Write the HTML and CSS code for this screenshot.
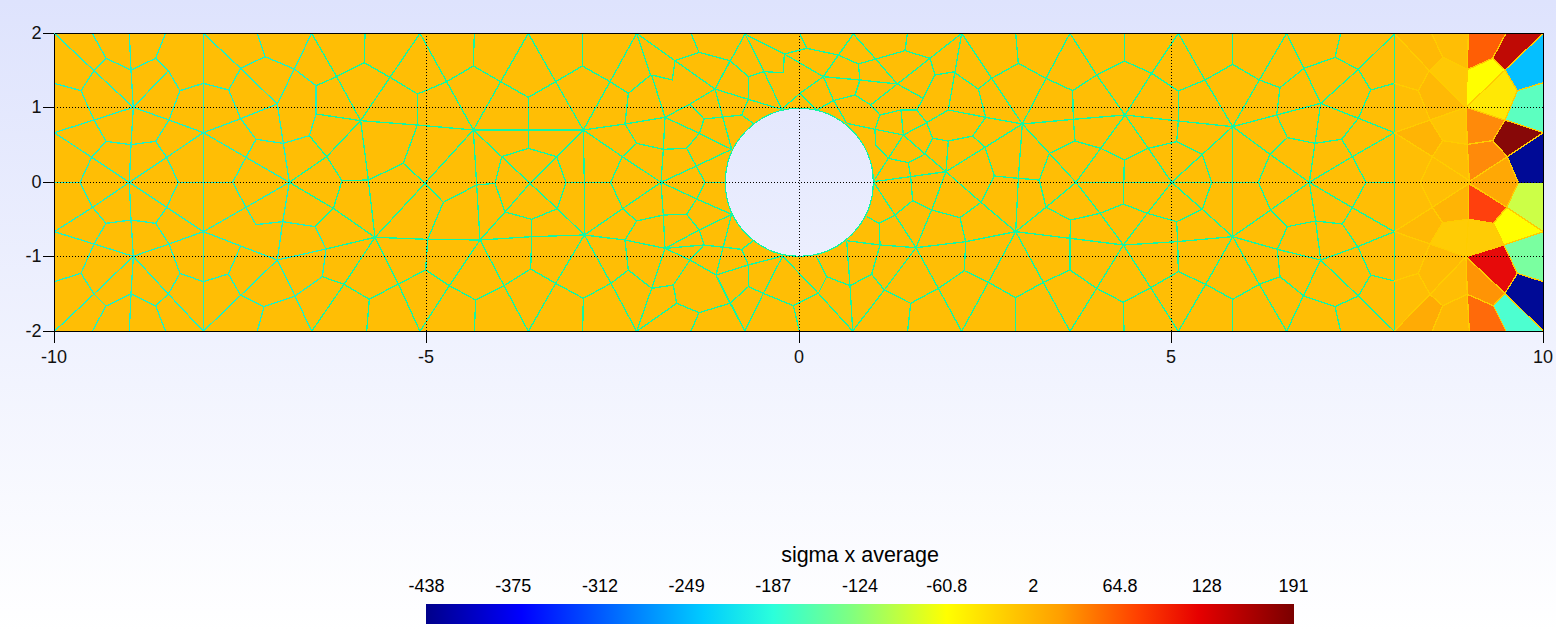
FILE: index.html
```html
<!DOCTYPE html>
<html lang="en">
<head>
<meta charset="utf-8">
<title>sigma x average</title>
<link rel="stylesheet" href="styles.css">
</head>
<body>
<main class="page">
<svg class="plot" width="1556" height="368" viewBox="0 0 1556 368" xmlns="http://www.w3.org/2000/svg">
  <defs><clipPath id="frame"><rect x="54" y="33" width="1490" height="299"/></clipPath></defs>

  <!-- plate with hole -->
  <path class="plate" fill-rule="evenodd" d="M54 33H1544V331H54Z M725.3 182.3A74 74 0 1 0 873.3 182.3A74 74 0 1 0 725.3 182.3Z"/>

  <g clip-path="url(#frame)">
    <!-- right end cells, upper half -->
    <g class="cells" transform="translate(1380 20) scale(.33333)">
      <polygon class="c-b9" points="43,40 155,40 188,112 148,152"/>
      <polygon class="c-bd" points="155,40 265,40 262,148 188,112"/>
      <polygon class="c-c8" points="188,112 262,148 258,262 148,152"/>
      <polygon class="c-b9" points="148,152 258,262 150,300 115,212"/>
      <polygon class="c-bd" points="43,190 115,212 150,300 43,338"/>
      <polygon class="c-bd" points="43,40 148,152 115,212 43,190"/>
      <polygon class="c-c4" points="150,300 258,262 262,373 188,362"/>
      <polygon class="c-b4" points="43,338 150,300 188,362 157,410"/>
      <polygon class="c-bd" points="157,410 188,362 262,373 270,483 120,488"/>
      <polygon class="c-bd" points="43,338 157,410 120,488 43,488"/>
      <polygon class="c-5e" points="265,40 378,40 338,115 264,148"/>
      <polygon class="c-red1" points="378,40 490,40 375,150 338,115"/>
      <polygon class="c-cyan" points="490,40 490,188 412,212 375,150"/>
      <polygon class="c-y1" points="264,148 338,115 375,150 258,262"/>
      <polygon class="c-y2" points="258,262 375,150 412,212 375,300"/>
      <polygon class="c-aqua" points="412,212 490,188 490,338 375,300"/>
      <polygon class="c-or" points="258,262 375,300 338,362 262,373"/>
      <polygon class="c-mar" points="375,300 490,338 382,410 338,362"/>
      <polygon class="c-navy" points="490,338 490,488 415,488 382,410"/>
      <polygon class="c-or" points="262,373 338,362 382,410 270,483"/>
      <polygon class="c-a8" points="270,483 382,410 415,488 270,490"/>
    </g>
    <!-- right end cells, lower half -->
    <g class="cells" transform="translate(1380 175) scale(.33333)">
      <polygon class="c-a8" points="268,25 415,23 380,97"/>
      <polygon class="c-lime" points="415,23 490,23 490,170 380,97"/>
      <polygon class="c-40" points="265,28 380,97 340,145 265,135"/>
      <polygon class="c-y1" points="380,97 490,170 372,210 340,145"/>
      <polygon class="c-aq2" points="490,170 490,320 412,295 372,210"/>
      <polygon class="c-cc" points="188,143 265,133 340,145 372,210 258,245 150,207"/>
      <polygon class="c-red2" points="258,245 372,210 412,295 375,355"/>
      <polygon class="c-navy" points="412,295 490,320 490,468 375,355"/>
      <polygon class="c-94" points="258,245 375,355 340,392 262,358"/>
      <polygon class="c-6a" points="262,358 340,392 378,468 268,468"/>
      <polygon class="c-aq3" points="340,392 375,355 490,468 378,468"/>
      <polygon class="c-ab" points="43,468 150,358 188,392 157,468"/>
      <polygon class="c-b9" points="157,468 188,392 262,358 268,468"/>
      <polygon class="c-bd" points="150,358 258,245 262,358 188,392"/>
      <polygon class="c-bb" points="115,295 150,207 258,245 150,358"/>
      <polygon class="c-bd" points="43,318 115,295 150,358 43,468"/>
      <polygon class="c-bd" points="43,170 150,207 115,295 43,318"/>
      <polygon class="c-b9" points="43,170 157,97 188,143 150,207"/>
      <polygon class="c-b4" points="157,97 268,25 265,135 188,143"/>
      <polygon class="c-bd" points="43,23 120,23 157,97 43,170"/>
      <polygon class="c-bd" points="120,23 268,25 157,97"/>
    </g>

    <!-- mesh, left part -->
    <g class="mesh mesh-cool" transform="translate(0 20) scale(.33333)">
      <polyline points="163,40 282,152 400,262"/>
      <polyline points="277,40 318,115 393,150 467,115 497,40"/>
      <polyline points="388,40 393,150 400,262 393,374 388,487 393,600 400,709 393,822 388,934"/>
      <polyline points="467,115 505,152 540,212 610,190 686,210 722,145 795,110 772,40"/>
      <polyline points="610,40 610,934"/>
      <polyline points="610,40 722,145 832,252"/>
      <polyline points="505,152 400,262"/>
      <polyline points="318,115 282,152 243,212 163,190"/>
      <polyline points="243,212 282,300 318,364 393,374 467,364 507,300 540,212"/>
      <polyline points="163,338 282,300 400,262 507,300 610,338 722,296 832,252"/>
      <polyline points="686,210 722,296 768,358 850,370 928,347 948,282 948,197 883,147 795,110"/>
      <polyline points="832,252 883,147 935,40"/>
      <polyline points="832,252 850,370 868,487 848,605 832,720"/>
      <polyline points="163,338 275,412 388,487 500,412 610,338"/>
      <polyline points="275,412 240,487 278,562 318,610 393,600 467,610 500,562 535,487 500,412"/>
      <polyline points="318,364 275,412"/>
      <polyline points="467,364 500,412"/>
      <polyline points="163,487 240,487"/>
      <polyline points="535,487 698,487 738,412 768,358"/>
      <polyline points="698,487 738,562 768,614 848,605 945,620 978,687 967,770 885,828 792,860 722,826 685,762 610,785 540,760 505,822 467,858 393,822 318,858 282,822 243,760 163,785"/>
      <polyline points="163,635 278,562 388,487 500,562 610,635 738,562 868,487"/>
      <polyline points="610,338 738,412 868,487"/>
      <polyline points="163,635 282,672 400,709 507,672 610,635 722,678 832,720 978,687"/>
      <polyline points="318,610 282,672 243,760"/>
      <polyline points="467,610 507,672 540,760"/>
      <polyline points="400,709 282,822 163,934"/>
      <polyline points="400,709 505,822 610,934 722,826 832,720"/>
      <polyline points="832,720 885,828 935,934"/>
      <polyline points="792,860 772,934"/>
      <polyline points="467,858 497,934"/>
      <polyline points="318,858 277,934"/>
      <polyline points="722,678 685,762"/>
    </g>

    <!-- mesh, second part -->
    <g class="mesh" transform="translate(330 20) scale(.33333)">
      <polyline points="105,40 103,128 180,172 263,222 350,185 430,138 512,185 595,232 677,185 757,138 840,185 895,220 962,165"/>
      <polyline points="-42,197 20,170 103,128"/>
      <polyline points="-55,40 20,170 92,302 180,172 270,40 350,185 430,330 512,185 595,40 677,185 760,330 840,185 920,40 962,165"/>
      <polyline points="433,40 430,138"/>
      <polyline points="757,40 757,138"/>
      <polyline points="920,40 1035,122"/>
      <polyline points="-42,282 92,302 262,315 430,330 595,330 760,330 885,312 1005,292"/>
      <polyline points="263,222 262,315 220,430 115,480 36,482 10,565"/>
      <polyline points="595,232 595,385 515,410 495,490 525,576 605,598 682,566 708,488 680,410 595,385"/>
      <polyline points="430,330 515,410 600,490 682,566 763,645"/>
      <polyline points="760,330 680,410 600,490 525,576 450,660"/>
      <polyline points="760,330 763,487 763,645"/>
      <polyline points="760,330 877,410 993,487"/>
      <polyline points="895,220 885,312 920,370 877,410 842,487 878,566 920,603 885,660 895,750 965,805"/>
      <polyline points="920,370 1000,388"/>
      <polyline points="430,330 285,490 135,652"/>
      <polyline points="92,302 115,480 135,652"/>
      <polyline points="-62,347 -10,410 92,302"/>
      <polyline points="-10,410 36,482"/>
      <polyline points="-122,487 -10,410"/>
      <polyline points="220,430 285,490 340,547 440,495 495,490"/>
      <polyline points="430,330 440,495 450,660"/>
      <polyline points="708,488 842,487"/>
      <polyline points="340,547 293,658 287,750 205,792 118,838 42,793 -23,770"/>
      <polyline points="135,652 293,658 450,660 605,650 763,645 885,660 1005,685"/>
      <polyline points="135,652 -12,687"/>
      <polyline points="135,652 42,793 -55,934"/>
      <polyline points="135,652 205,792 270,934 358,797 450,660 522,797 595,934 677,790 763,645 843,790 920,934 965,805"/>
      <polyline points="-122,487 10,565 135,652"/>
      <polyline points="10,565 -45,620"/>
      <polyline points="605,598 605,650 602,747 522,797"/>
      <polyline points="602,747 677,790 760,835 843,790 895,750"/>
      <polyline points="287,750 358,797 437,840 522,797"/>
      <polyline points="437,840 433,934"/>
      <polyline points="760,835 758,934"/>
      <polyline points="118,838 110,934"/>
      <polyline points="878,566 763,645"/>
      <polyline points="993,487 878,566"/>
      <polyline points="920,934 1040,850"/>
      <polyline points="920,603 1000,585"/>
    </g>

    <!-- mesh, centre around the hole -->
    <g class="mesh" transform="translate(640 30) scale(.33333)">
      <polyline points="35,135 75,262 70,358 63,457 70,555 75,655 35,775"/>
      <polyline points="105,92 177,67 153,10"/>
      <polyline points="105,92 97,150 35,135"/>
      <polyline points="105,92 225,177 150,222 75,262"/>
      <polyline points="177,67 270,92 225,177 315,12"/>
      <polyline points="270,92 325,140 325,208 225,177"/>
      <polyline points="315,12 372,125 425,238"/>
      <polyline points="325,140 372,125 430,128 433,72 315,12"/>
      <polyline points="433,72 550,140 640,12"/>
      <polyline points="433,72 500,55 480,12"/>
      <polyline points="500,55 595,75 640,12"/>
      <polyline points="595,75 550,140 480,190 425,238"/>
      <polyline points="595,75 655,102 707,87 795,62 802,12"/>
      <polyline points="640,12 707,87 772,162 870,85 795,62"/>
      <polyline points="870,85 965,10"/>
      <polyline points="655,102 660,150 645,195 692,225 772,162"/>
      <polyline points="550,140 660,150 772,162"/>
      <polyline points="870,85 885,135 945,125 965,10"/>
      <polyline points="885,135 850,205 772,162"/>
      <polyline points="325,208 425,238"/>
      <polyline points="550,140 580,210 620,280"/>
      <polyline points="530,240 580,212 645,195"/>
      <polyline points="480,190 530,240"/>
      <polyline points="75,262 178,310 275,358 225,177"/>
      <polyline points="150,222 192,267 178,310 140,355 195,457 255,457"/>
      <polyline points="192,267 305,255 340,280"/>
      <polyline points="305,255 325,208"/>
      <polyline points="70,358 140,355"/>
      <polyline points="63,457 165,410 275,358"/>
      <polyline points="63,457 170,507 275,553"/>
      <polyline points="195,457 170,507 140,553 178,600 275,553"/>
      <polyline points="70,555 140,553"/>
      <polyline points="75,655 178,600 192,645 75,655"/>
      <polyline points="192,645 305,658 340,632"/>
      <polyline points="305,658 325,705 228,735"/>
      <polyline points="75,655 150,690 228,735 275,553"/>
      <polyline points="150,690 100,765 35,775"/>
      <polyline points="150,690 192,645"/>
      <polyline points="100,765 110,820 177,848 270,820 228,735"/>
      <polyline points="228,735 315,903 370,790 428,678"/>
      <polyline points="110,820 -10,904"/>
      <polyline points="177,848 153,903"/>
      <polyline points="270,820 315,903"/>
      <polyline points="325,705 428,678"/>
      <polyline points="325,705 325,770 370,790 460,827 535,790 428,678"/>
      <polyline points="535,790 560,740 528,678"/>
      <polyline points="460,827 478,903"/>
      <polyline points="325,770 270,820"/>
      <polyline points="535,790 638,903"/>
      <polyline points="560,740 630,767 695,733 720,645 718,580 680,560"/>
      <polyline points="620,632 630,767 638,903"/>
      <polyline points="620,632 720,645 828,653"/>
      <polyline points="718,580 765,555 818,512 812,440 805,398"/>
      <polyline points="700,455 765,555 828,653"/>
      <polyline points="700,455 812,440 918,425"/>
      <polyline points="700,455 745,385 790,315"/>
      <polyline points="620,280 705,298 790,315 783,240 720,255 692,225"/>
      <polyline points="720,255 705,298 707,345 745,385 805,398 855,372 878,325 860,278 790,315"/>
      <polyline points="790,315 855,372 918,425"/>
      <polyline points="783,240 830,240 860,278 925,240 945,125"/>
      <polyline points="878,325 925,333 918,425"/>
      <polyline points="830,240 850,205"/>
      <polyline points="925,240 1037,262"/>
      <polyline points="925,333 998,318"/>
      <polyline points="918,425 1035,352"/>
      <polyline points="918,425 1023,517"/>
      <polyline points="818,512 875,540 828,653"/>
      <polyline points="918,425 875,540 960,563"/>
      <polyline points="828,653 977,635"/>
      <polyline points="828,653 733,780 638,903"/>
      <polyline points="695,733 733,780 812,820 895,775 828,653"/>
      <polyline points="812,820 803,903"/>
      <polyline points="895,775 973,722"/>
      <polyline points="895,775 965,904"/>
    </g>

    <!-- mesh, right part -->
    <g class="mesh" transform="translate(950 20) scale(.33333)">
      <polyline points="35,40 125,175 217,312 288,175 360,40 440,165 525,285 605,160 685,40 765,180 848,320 928,180 1010,40 1062,145 1112,250"/>
      <polyline points="197,40 205,130 125,175 85,207 10,155"/>
      <polyline points="205,130 288,175 368,212 440,165 523,123 605,160 685,213 765,180 848,133 928,180 990,203 1062,145 1155,112 1172,40"/>
      <polyline points="523,40 523,123"/>
      <polyline points="848,40 848,133"/>
      <polyline points="85,207 107,292 68,348"/>
      <polyline points="68,348 105,382"/>
      <polyline points="107,292 217,312 370,298 525,285 685,303 848,320 980,285 1112,250 1225,295 1333,338"/>
      <polyline points="368,212 370,298 375,363 298,400 268,480 288,562 362,600 450,580 520,552 592,580 680,605 757,568 785,487 757,403 680,365 595,385 523,420 452,385 375,363"/>
      <polyline points="685,213 685,303 680,365"/>
      <polyline points="217,312 298,400 378,487 452,385 525,285 595,385 665,487 757,403 848,320 848,650"/>
      <polyline points="217,312 105,382 133,468 205,475 268,480"/>
      <polyline points="133,468 93,547 30,593 47,665 43,752 115,787 197,833 280,787 360,750 440,805 520,847 602,803 685,755 767,793 848,838 928,793 990,770 1062,828 1155,860 1225,828 1262,765 1333,783"/>
      <polyline points="217,312 205,475 197,635"/>
      <polyline points="93,547 197,635 288,562 378,487 450,580 520,675 592,580 665,487 757,568 848,650"/>
      <polyline points="378,487 523,487 785,487"/>
      <polyline points="523,420 520,552"/>
      <polyline points="785,487 925,487 960,403 1012,353 1095,370 1175,358 1225,295 1262,210 1333,190"/>
      <polyline points="848,320 960,403 1078,487 1207,410 1333,338"/>
      <polyline points="925,487 962,570 1012,620 1097,603 1177,612 1223,680 1262,765"/>
      <polyline points="848,650 962,570 1078,487 1207,563 1333,635"/>
      <polyline points="1078,487 1095,370 1112,250"/>
      <polyline points="1078,487 1097,603 1112,720"/>
      <polyline points="1175,358 1207,410 1248,487 1207,563 1177,612"/>
      <polyline points="1248,487 1333,487"/>
      <polyline points="990,203 980,285 1012,353"/>
      <polyline points="1112,250 1225,148 1335,40"/>
      <polyline points="1155,112 1225,148 1262,210"/>
      <polyline points="1112,720 1223,680 1333,635"/>
      <polyline points="848,650 982,688 1112,720"/>
      <polyline points="982,688 1012,620"/>
      <polyline points="982,688 990,770"/>
      <polyline points="1112,720 1060,828 1010,934 928,793 848,650 767,793 685,934 602,803 520,675 440,805 360,934 280,787 197,635 115,787 35,934"/>
      <polyline points="1112,720 1225,828 1333,934"/>
      <polyline points="1155,860 1172,934"/>
      <polyline points="848,838 848,934"/>
      <polyline points="520,847 522,934"/>
      <polyline points="197,833 197,934"/>
      <polyline points="197,635 360,655 520,675 680,665 848,650"/>
      <polyline points="362,600 360,655 360,750"/>
      <polyline points="680,605 683,665 685,755"/>
      <polyline points="47,665 197,635"/>
      <polyline points="1333,40 1333,934"/>
    </g>

    <!-- hole outline -->
    <circle class="hole-edge" cx="799.3" cy="182.3" r="74"/>

    <!-- cell borders at the right end -->
    <g class="mesh mesh-warm" transform="translate(1380 20) scale(.33333)">
      <polyline points="43,40 148,152 188,112 155,40"/>
      <polyline points="188,112 262,148"/>
      <polyline points="148,152 258,262"/>
      <polyline points="43,190 115,212 148,152"/>
      <polyline points="115,212 150,300 258,262"/>
      <polyline points="43,338 150,300 188,362 262,373"/>
      <polyline points="43,338 157,410 270,483"/>
      <polyline points="188,362 157,410 120,488"/>
      <polyline points="265,40 262,148 258,262 262,373 268,483"/>
      <polyline points="378,40 338,115 264,148"/>
      <polyline points="490,40 375,150 338,115"/>
      <polyline points="375,150 258,262"/>
      <polyline points="375,150 412,212 375,300 258,262"/>
      <polyline points="412,212 490,188"/>
      <polyline points="375,300 490,338 382,410 338,362 375,300"/>
      <polyline points="338,362 262,373"/>
      <polyline points="382,410 270,483"/>
      <polyline points="382,410 415,488"/>
    </g>
    <g class="mesh mesh-warm" transform="translate(1380 175) scale(.33333)">
      <polyline points="120,23 157,97 268,25 380,97 415,23"/>
      <polyline points="43,170 157,97 188,143 265,133 340,145"/>
      <polyline points="188,143 150,207 43,170"/>
      <polyline points="150,207 115,295 43,318"/>
      <polyline points="115,295 150,358 43,468"/>
      <polyline points="150,358 188,392 157,468"/>
      <polyline points="188,392 262,358"/>
      <polyline points="150,358 258,245 150,207"/>
      <polyline points="265,25 265,135 258,245 262,358 268,468"/>
      <polyline points="380,97 490,170 372,210 340,145 380,97"/>
      <polyline points="258,245 372,210 412,295 375,355 258,245"/>
      <polyline points="412,295 490,320"/>
      <polyline points="262,358 340,392 375,355 490,468"/>
      <polyline points="340,392 378,468"/>
    </g>
  </g>

  <!-- dotted grid -->
  <g class="grid">
    <line x1="54" y1="107.5" x2="1543" y2="107.5"/>
    <line x1="54" y1="182.5" x2="1543" y2="182.5"/>
    <line x1="54" y1="256.5" x2="1543" y2="256.5"/>
    <line x1="426.5" y1="33" x2="426.5" y2="331"/>
    <line x1="799.5" y1="33" x2="799.5" y2="331"/>
    <line x1="1171.5" y1="33" x2="1171.5" y2="331"/>
  </g>

  <!-- axes -->
  <g class="axis">
    <path d="M54.5 33.5H1543.5V343M54.5 33.5V343M54 331.5H1543.5"/>
    <path d="M43 33.5H54M43 107.5H54M43 182.5H54M43 256.5H54M43 331.5H54"/>
    <path d="M426.5 331V343M799.5 331V343M1171.5 331V343"/>
  </g>

  <g class="tick-y">
    <text x="41.5" y="39">2</text>
    <text x="41.5" y="113">1</text>
    <text x="41.5" y="188">0</text>
    <text x="41.5" y="262">-1</text>
    <text x="41.5" y="337">-2</text>
  </g>
  <g class="tick-x">
    <text x="54" y="363">-10</text>
    <text x="426" y="363">-5</text>
    <text x="799" y="363">0</text>
    <text x="1171" y="363">5</text>
    <text x="1543" y="363">10</text>
  </g>
</svg>

<section class="legend">
  <h2 class="legend-title">sigma x average</h2>
  <div class="legend-scale">
    <span>-438</span><span>-375</span><span>-312</span><span>-249</span><span>-187</span><span>-124</span><span>-60.8</span><span>2</span><span>64.8</span><span>128</span><span>191</span>
  </div>
  <div class="legend-bar"></div>
</section>
</main>
</body>
</html>
```

FILE: styles.css
```css
html, body {
  margin: 0;
  padding: 0;
}

body {
  width: 1556px;
  height: 632px;
  overflow: hidden;
  font-family: "Liberation Sans", Arial, sans-serif;
  color: #000;
  background: linear-gradient(180deg, #dee3fd 0%, #ffffff 100%);
}

.page {
  display: flex;
  flex-direction: column;
  height: 632px;
}

.plot {
  display: block;
  flex: none;
}

.plate { fill: #ffbe05; }

.cells polygon {
  shape-rendering: crispEdges;
}

.mesh polyline {
  fill: none;
  stroke: #12f7a4;
  stroke-width: 1.3;
  vector-effect: non-scaling-stroke;
  shape-rendering: crispEdges;
}

.mesh-cool polyline { stroke: #1ff0c4; }
.mesh-warm polyline { stroke: #ffcc00; }

.hole-edge {
  fill: none;
  stroke: #12f7a4;
  stroke-width: 1.2;
  shape-rendering: crispEdges;
}

.grid line {
  stroke: #000;
  stroke-width: 1;
  stroke-dasharray: 1 2;
  shape-rendering: crispEdges;
}

.axis path {
  fill: none;
  stroke: #000;
  stroke-width: 1;
  shape-rendering: crispEdges;
}

.tick-y text,
.tick-x text {
  font-size: 18px;
  font-family: "Liberation Sans", Arial, sans-serif;
  fill: #111;
}

.tick-y text { text-anchor: end; }
.tick-x text { text-anchor: middle; }

.c-b4 { fill: #ffb405; }
.c-b9 { fill: #ffb905; }
.c-bb { fill: #ffbb05; }
.c-bd { fill: #ffbe05; }
.c-c4 { fill: #ffc405; }
.c-c8 { fill: #ffc805; }
.c-cc { fill: #ffcc05; }
.c-ab { fill: #ffab05; }
.c-a8 { fill: #ffa805; }
.c-94 { fill: #ff9405; }
.c-or { fill: #ff8a0a; }
.c-6a { fill: #ff6a0a; }
.c-5e { fill: #ff5e05; }
.c-40 { fill: #ff400d; }
.c-red1 { fill: #bf0a05; }
.c-red2 { fill: #e60a0a; }
.c-mar { fill: #870808; }
.c-navy { fill: #000a96; }
.c-cyan { fill: #05bfff; }
.c-aqua { fill: #5cffc0; }
.c-aq2 { fill: #7affa0; }
.c-aq3 { fill: #4dffd0; }
.c-lime { fill: #ccff47; }
.c-y1 { fill: #ffff00; }
.c-y2 { fill: #ffe805; }

.legend {
  display: flex;
  flex-direction: column;
  align-items: center;
  width: 954px;
  margin: 175px 0 0 383px;
}

.legend-title {
  margin: 0;
  font-size: 21.5px;
  font-weight: 400;
  line-height: 24px;
}

.legend-scale {
  display: grid;
  grid-template-columns: repeat(11, 86.7px);
  margin-top: 9px;
  font-size: 18px;
  line-height: 20px;
  text-align: center;
}

.legend-bar {
  width: 868px;
  height: 20px;
  margin-top: 8px;
  background: linear-gradient(90deg,
    #00008a 0%,
    #0000ff 11%,
    #0080ff 24%,
    #00ccff 32%,
    #2bffdb 40%,
    #80ff80 49%,
    #ffff00 60%,
    #ff9f00 73%,
    #ff4000 82%,
    #e60000 89%,
    #7a0000 100%);
}
```
